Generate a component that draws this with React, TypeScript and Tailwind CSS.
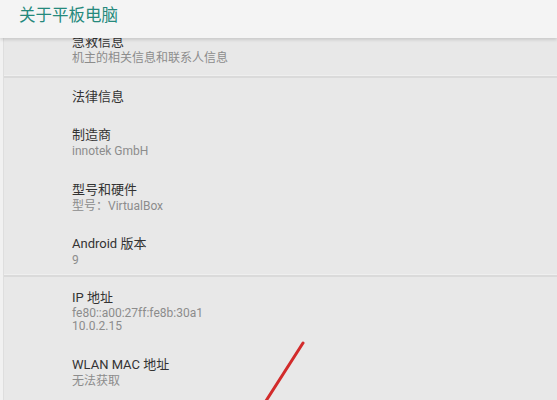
type Row = {
  title: string;
  lines?: string[];
  pt?: string;
  pb?: string;
  tight?: boolean;
};

const sections: Row[][] = [
  [
    {
      title: '急救信息',
      lines: ['机主的相关信息和联系人信息'],
      pb: 'pb-[10px]',
    },
  ],
  [
    { title: '法律信息', pb: 'pb-[10.5px]' },
    { title: '制造商', lines: ['innotek GmbH'] },
    { title: '型号和硬件', lines: ['型号：VirtualBox'] },
    { title: 'Android 版本', lines: ['9'], pb: 'pb-[7px]' },
  ],
  [
    {
      title: 'IP 地址',
      lines: ['fe80::a00:27ff:fe8b:30a1', '10.0.2.15'],
      pt: 'pt-[12px]',
      tight: true,
    },
    { title: 'WLAN MAC 地址', lines: ['无法获取'] },
  ],
];

const PrefRow = ({ row }: { row: Row }) => (
  <div className={`pl-[68px] ${row.pt ?? 'pt-[10.5px]'} ${row.pb ?? 'pb-[12px]'}`}>
    <div className="text-[13px] leading-[17px] text-[#333333]">{row.title}</div>
    {row.lines && (
      <div
        className={`text-[12px] text-[#8c8c8c] ${
          row.tight ? 'mt-[1px] leading-[13px]' : 'mt-[1px] leading-[14px]'
        }`}
      >
        {row.lines.map((l) => (
          <div key={l}>{l}</div>
        ))}
      </div>
    )}
  </div>
);

export default function App() {
  return (
    <div
      className="relative w-[557px] h-[400px] overflow-hidden bg-[#e8e8e8]"
      style={{ fontFamily: 'Roboto, "Noto Sans CJK SC", sans-serif' }}
    >
      <div className="relative z-10 h-[38px] bg-[#f4f4f4] pl-[19px] pt-[4px] shadow-[0_2px_3px_rgba(0,0,0,0.13)]">
        <span className="text-[16.5px] leading-[21px] text-[#25897c]">关于平板电脑</span>
      </div>

      <div className="flex -mt-[16px]">
        <div className="w-[4px] shrink-0 bg-[#f1f1f1] border-r border-[#dedede]" />
        <div className="flex-1">
          {sections.map((rows, i) => (
            <div key={i}>
              {i > 0 && (
                <div>
                  <div className="h-px bg-[#efefef]" />
                  <div className="h-[2px] bg-[#dadada]" />
                </div>
              )}
              {rows.map((r) => (
                <PrefRow key={r.title} row={r} />
              ))}
            </div>
          ))}
        </div>
      </div>

      {/* red pen stroke over the screenshot */}
      <svg className="absolute left-0 top-0 z-20" width="557" height="400">
        <line
          x1="303"
          y1="343"
          x2="264"
          y2="404"
          stroke="#d22b2b"
          strokeWidth="3"
          strokeLinecap="round"
        />
      </svg>
    </div>
  );
}
